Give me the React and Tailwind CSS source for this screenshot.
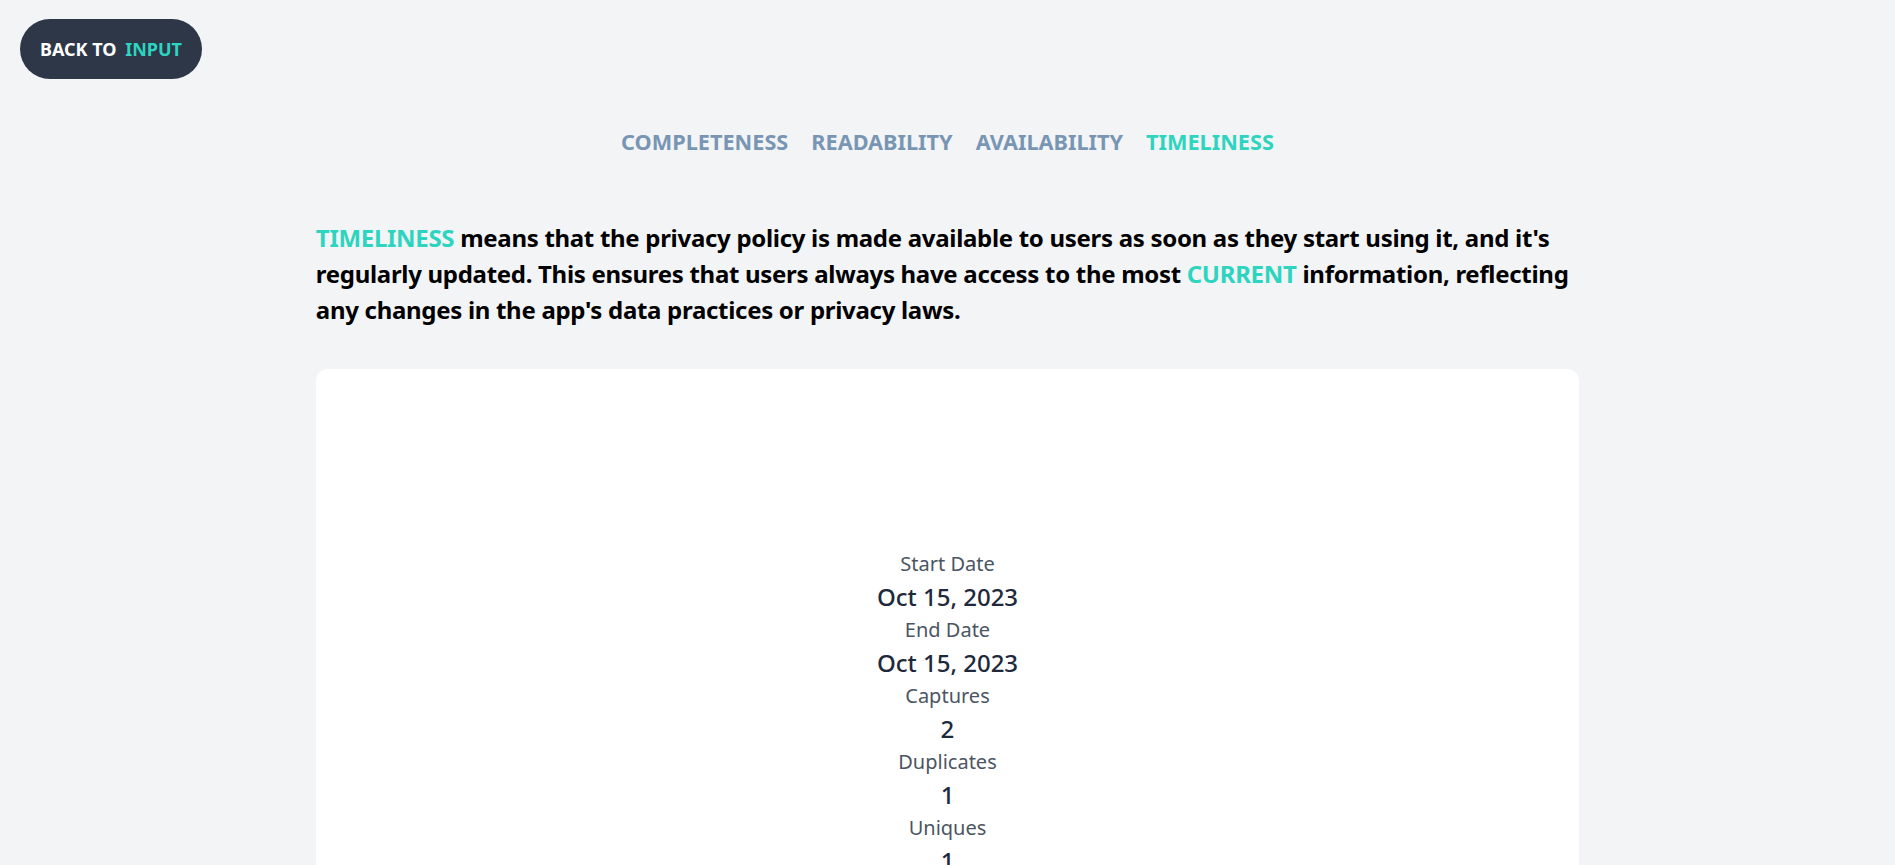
import React from 'react';

const stats = [
  { label: 'Start Date', value: 'Oct 15, 2023' },
  { label: 'End Date', value: 'Oct 15, 2023' },
  { label: 'Captures', value: '2' },
  { label: 'Duplicates', value: '1' },
  { label: 'Uniques', value: '1' },
];

const tabs = ['COMPLETENESS', 'READABILITY', 'AVAILABILITY', 'TIMELINESS'];

export default function App() {
  return (
    <div className="min-h-screen bg-[#f3f4f6] font-['Noto_Sans',sans-serif] text-black">
      <div className="pt-[19px] pl-5">
        <button className="h-[60px] rounded-full bg-[#2d3748] px-5 text-lg font-bold text-white">
          BACK TO <span className="ml-1 text-[#2dd4bf]">INPUT</span>
        </button>
      </div>

      {/* tabs */}
      <div className="mt-[49px] flex justify-center gap-[23px] text-[21.7px] font-bold leading-7">
        {tabs.map((t) => (
          <span key={t} className={t === 'TIMELINESS' ? 'text-[#2dd4bf]' : 'text-[#7896b3]'}>
            {t}
          </span>
        ))}
      </div>

      <p className="mx-auto mt-[64px] w-2/3 text-2xl font-bold leading-9 tracking-[-0.3px]">
        <span className="text-[#2dd4bf]">TIMELINESS</span> means that the privacy policy is made
        available to users as soon as they start using it, and it's regularly updated. This ensures
        that users always have access to the most <span className="text-[#2dd4bf]">CURRENT</span>{' '}
        information, reflecting any changes in the app's data practices or privacy laws.
      </p>

      <div className="mx-auto mt-[41px] flex w-2/3 flex-col items-center rounded-xl bg-white pt-[180px] pb-10">
        {stats.map((s) => (
          <div key={s.label} className="flex flex-col items-center">
            <p className="text-[20px] leading-[30px] text-[#4b5563]">{s.label}</p>
            <p className="text-[24px] leading-[36px] font-medium text-[#1e293b]">{s.value}</p>
          </div>
        ))}
      </div>
    </div>
  );
}
